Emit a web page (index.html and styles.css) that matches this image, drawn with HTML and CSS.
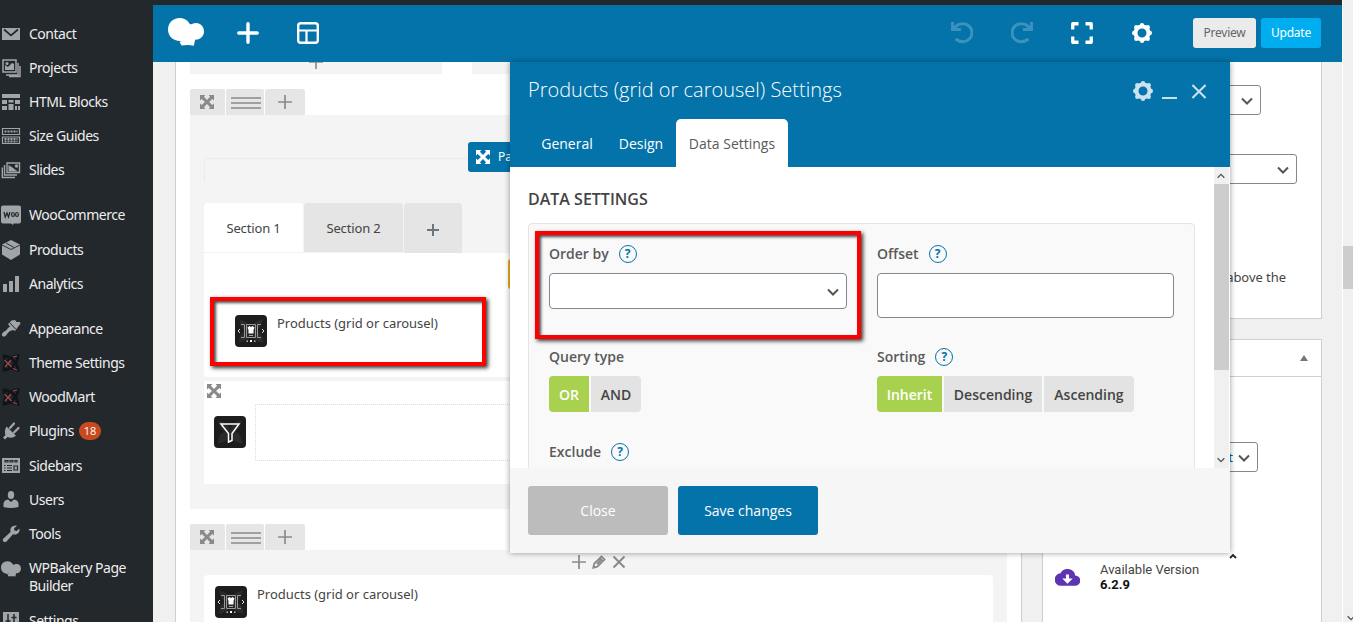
FILE: index.html
```html
<!DOCTYPE html>
<html lang="en">
<head>
<meta charset="utf-8">
<title>Page Builder</title>
<link rel="stylesheet" href="styles.css">
</head>
<body>
<svg class="defs" width="0" height="0" aria-hidden="true">
  <symbol id="expand" viewBox="0 0 14 14"><path fill="currentColor" d="M0 0h5.400L3.900 1.700 7 4.900l3.100-3.200L8.600 0H14v5.400l-1.700-1.500L9.100 7l3.200 3.100L14 8.600V14H8.600l1.500-1.700L7 9.100l-3.100 3.200L5.400 14H0V8.600l1.700 1.500L4.900 7 1.700 3.900 0 5.400z"/></symbol>
  <symbol id="plus" viewBox="0 0 14 14"><path stroke="currentColor" stroke-width="1.700" d="M7 0v14M0 7h14"/></symbol>
  <symbol id="gear" viewBox="0 0 20 20"><circle cx="10" cy="10" r="6.500" fill="none" stroke="currentColor" stroke-width="4"/><g fill="currentColor"><circle cx="10" cy="2.200" r="2.200"/><circle cx="10" cy="17.800" r="2.200"/><circle cx="2.200" cy="10" r="2.200"/><circle cx="17.800" cy="10" r="2.200"/><circle cx="4.300" cy="4.300" r="2.200"/><circle cx="15.700" cy="4.300" r="2.200"/><circle cx="4.300" cy="15.700" r="2.200"/><circle cx="15.700" cy="15.700" r="2.200"/></g></symbol>
  <symbol id="chef" viewBox="0 0 36 28"><path fill="currentColor" d="M11.500 0C16.500 0 20 2.500 21.500 5.700 23 6.700 24 6.500 25 5.600 31 3.500 36 7.500 36 13.500c0 4.800-4 8.500-8.800 8.100l-1.400 6.100c-4-1.100-8-.9-12.300-.3l-2-3.700 3.200-1C6 24 0 19 0 11.500 0 5 5 0 11.500 0z"/></symbol>
  <symbol id="chevron" viewBox="0 0 12 8"><path fill="none" stroke="#555" stroke-width="2" d="m1 1.500 5 5 5-5"/></symbol>
  <symbol id="wood" viewBox="0 0 18 18"><g fill="none" stroke="#10151b" stroke-width="2.800"><path d="M2 2c6 0 14 7 14 14-7 0-14-7-14-14z"/><path d="M16 2C16 8 9 16 2 16c0-7 7-14 14-14z"/></g><path fill="none" stroke="#a24a48" stroke-width="1.300" d="m2.500 6 7 7M3 13l6-7M11 3.200l4-1.200M11 14.500l4 1.500"/></symbol>
  <symbol id="carousel" viewBox="0 0 32 32"><rect width="32" height="32" rx="4" fill="#1d1d1d"/><path fill="#2b2b2b" d="M4 4q12 3 12 12Q16 7 28 4q-3 12-8 12 8 0 8 12-12-3-12-12 0 9-12 12 0-12 8-12Q6 16 4 4z"/><path fill="none" stroke="#999" d="M6 9.500h3.500v13H6M26 9.500h-3.500v13H26M11.500 9.500h9v13h-9z"/><path fill="#fff" d="m12.500 12.500 2-1.500 1.500 1 1.500-1 2 1.500-1 2.500v3.500h-5V15z"/><path stroke="#aaa" d="M14 20.500h4"/><path fill="none" stroke="#ddd" d="m5 14-2 2 2 2M27 14l2 2-2 2"/><path fill="#bbb" d="M11.500 25.500H13V27h-1.500zM19 25.500h1.500V27H19z"/><path fill="#fff" d="M15 25h2v2h-2z"/></symbol>
</svg>

<div class="window">
<div class="app">
  <aside class="sidebar">
    <div class="item"><svg viewBox="0 0 20 20"><path d="M1 4h18v12H1z"/><path fill="none" stroke="#23282d" stroke-width="1.700" d="m3 5.500 7 6 7-6"/></svg><span>Contact</span></div>
    <div class="item"><svg viewBox="0 0 20 20"><path fill="none" stroke="#a0a5aa" stroke-width="1.500" d="M2 2h13v12H2zM17 5v12H5M19 8v10.500H8"/><path d="M4 12V7l3 2 4-4 2 1v6z"/><circle cx="6" cy="5.500" r="1.500"/></svg><span>Projects</span></div>
    <div class="item"><svg viewBox="0 0 20 20"><path d="M1 2h18v4H1zM1 8h5v4H1zM7.500 8h5v2.500h-5zM14 8h5v4h-5zM1 14h5v4H1zM7.500 12h5v6h-5zM14 14h2v4h-2zM17 14h2v4h-2z"/></svg><span>HTML Blocks</span></div>
    <div class="item"><svg viewBox="0 0 20 20"><g fill="none" stroke="#a0a5aa" stroke-width="1.200"><path d="M1.500 2.500h17v6h-17zM1.500 11h17v6.500h-17z"/><path stroke-width="1.800" stroke-dasharray="2 1" d="M3.500 5.500h13M3.500 13h13M3.500 15.500h13"/></g></svg><span>Size Guides</span></div>
    <div class="item"><svg viewBox="0 0 20 20"><path fill="none" stroke="#a0a5aa" stroke-width="1.400" d="M6 3h12.500v9.500H6zM3.500 5v10H16M1.300 7.500v10H14"/><path d="m7.500 5 4 2.500 2.500 2 3 2H7.500z"/><circle cx="15.500" cy="6" r="1.700"/></svg><span>Slides</span></div>
    <div class="sep"></div>
    <div class="item"><svg viewBox="0 0 20 20"><path d="M2 .5h16q2 0 2 2v14q0 2-2 2h-5.500L12 20l-2-1.500H2q-2 0-2-2v-14q0-2 2-2z"/><path fill="none" stroke="#23282d" stroke-width="1.300" d="m3 7 1.200 5L6 8l1.500 4L9 7"/><ellipse cx="12" cy="9.500" rx="1.400" ry="2" fill="none" stroke="#23282d" stroke-width="1.200"/><ellipse cx="16" cy="9.500" rx="1.400" ry="2" fill="none" stroke="#23282d" stroke-width="1.200"/></svg><span>WooCommerce</span></div>
    <div class="item"><svg viewBox="0 0 20 20"><path d="m10 0 9 4.500v10L10 20l-9-5.500v-10z"/><path fill="none" stroke="#23282d" stroke-width=".9" d="m1 5 9 4.500L19 5M5 3l8 4.500"/></svg><span>Products</span></div>
    <div class="item"><svg viewBox="0 0 20 20"><path d="M2 10h4v8H2zM8 7h4v11H8zM14 2h4v16h-4z"/></svg><span>Analytics</span></div>
    <div class="sep"></div>
    <div class="item"><svg viewBox="0 0 20 20"><path d="m7 5 3.500-3.500L14 1l1.500 2H19l.5 1.500L14 12l-2-1-3 1q-2 1-4 4.500-2 2-3.500.500T2 13.500q4-2 5-4.500l2-1.500z"/><path stroke="#23282d" d="m8.500 3.500 6.500 7"/></svg><span>Appearance</span></div>
    <div class="item"><svg viewBox="0 0 20 20"><use href="#wood" x="1" y="1" width="18" height="18"/></svg><span>Theme Settings</span></div>
    <div class="item"><svg viewBox="0 0 20 20"><use href="#wood" x="1" y="1" width="18" height="18"/></svg><span>WoodMart</span></div>
    <div class="item"><svg viewBox="0 0 20 20"><path d="m5.500 5.500 9.500 9.200q-4 3.300-8.500 1.300L4 18.500l-2-2L4.500 14Q3 10 5.500 5.500z"/><path stroke="#a0a5aa" stroke-width="2.300" stroke-linecap="round" d="m9 7 4-4.500M13 11.500 17.500 7"/></svg><span>Plugins</span><b class="count">18</b></div>
    <div class="item"><svg viewBox="0 0 20 20"><path d="M1 2h18v15H1z"/><path fill="none" stroke="#23282d" stroke-width="1.200" d="M4 4.500h3V6H4zM9 4.500h3V6H9zM14 4.500h2V6h-2zM3 9.500h1.500M6 9.500h5M3 12h1.500M6 12h5M3 14.500h1.500M6 14.500h5M13 10h3.500v4H13z"/></svg><span>Sidebars</span></div>
    <div class="item"><svg viewBox="0 0 20 20"><ellipse cx="10" cy="5" rx="3.200" ry="4"/><path d="M2.500 17v-3.500Q3 10 7 9.500l3 2.500 3-2.500q4 .5 4.500 4V17q-7.500 2-15 0z"/></svg><span>Users</span></div>
    <div class="item"><svg viewBox="0 0 20 20"><path d="M16 1.500 13 4.500l.5 2 2 .5 3-2.500q.5 4-2.500 5.500-2 1-4 .3L5.500 17.500Q3 19 2 17t1-3l6.500-6Q8.500 5 10.500 3T16 1.500z"/></svg><span>Tools</span></div>
    <div class="item two"><svg viewBox="0 0 20 20"><use href="#chef" y="2" width="20" height="16" color="#a0a5aa"/></svg><span>WPBakery Page<br>Builder</span></div>
    <div class="item"><svg viewBox="0 0 20 20"><path d="M2 1h16v17H2z"/><path stroke="#23282d" stroke-width="1.500" d="M7 3v12M4.500 10h5M13 3v12M10.500 6.500h5"/></svg><span>Settings</span></div>
  </aside>

  <main class="main">
    <header class="navbar">
      <svg class="logo" viewBox="0 0 36 28"><use href="#chef"/></svg>
      <svg class="nav-plus" viewBox="0 0 22 22"><path stroke="#fff" stroke-width="3.400" stroke-linecap="round" d="M11 1.800v18.400M1.800 11h18.400"/></svg>
      <svg class="nav-layout" viewBox="0 0 22 22"><rect x="1.200" y="1.200" width="19.600" height="19.600" rx="2.500" fill="none" stroke="#fff" stroke-width="2.400"/><path stroke="#fff" stroke-width="2.200" d="M1 8.500h20M9.500 9v12"/></svg>
      <span class="grow"></span>
      <svg class="nav-ico faded" viewBox="0 0 22 22"><path fill="none" stroke="#fff" stroke-width="3" d="M1.500 0v7.500H10M2 7.500Q6 1.500 12 1.700a9 9 0 0 1 0 18q-4 0-7.500-2.700"/></svg>
      <svg class="nav-ico faded redo" viewBox="0 0 22 22"><path fill="none" stroke="#fff" stroke-width="3" d="M1.500 0v7.500H10M2 7.500Q6 1.500 12 1.700a9 9 0 0 1 0 18q-4 0-7.500-2.700"/></svg>
      <svg class="nav-ico" viewBox="0 0 22 22"><path fill="none" stroke="#fff" stroke-width="3.300" stroke-linejoin="round" d="M1.750 7.500V1.750H7.500M14.500 1.750h5.750V7.500M20.250 14.500v5.750H14.500M7.500 20.250H1.750V14.500"/></svg>
      <svg class="nav-gear" viewBox="0 0 20 20"><use href="#gear"/></svg>
      <button class="nav-btn preview">Preview</button>
      <button class="nav-btn update">Update</button>
    </header>

    <div class="content">
      <section class="editor">
        <div class="prev-row"><div class="prev-a"><svg viewBox="0 0 14 14"><use href="#plus"/></svg></div><div class="prev-b"></div></div>
        <div class="controls first"><i class="c1"><svg viewBox="0 0 14 14"><use href="#expand"/></svg></i><i class="c2"><s></s><s></s><s></s></i><i class="c3"><svg viewBox="0 0 14 14"><use href="#plus"/></svg></i></div>
        <div class="row-block">
          <div class="tour-control"><div class="page-btn"><svg viewBox="0 0 14 14"><use href="#expand"/></svg><span>Pa</span></div></div>
          <div class="dotted-head"></div>
          <div class="sections">
            <div class="section active">Section 1</div><div class="section">Section 2</div><div class="section add"><svg viewBox="0 0 14 14"><path stroke="#6c757d" stroke-width="2.300" d="M7 0v14M0 7h14"/></svg></div>
          </div>
          <div class="pane">
            <div class="element"><svg viewBox="0 0 32 32"><use href="#carousel"/></svg><span>Products (grid or carousel)</span></div>
            <div class="orange"></div>
            <div class="mark mark-a"></div>
          </div>
          <div class="filter-block">
            <svg class="grab" viewBox="0 0 14 14"><use href="#expand"/></svg>
            <div class="filter-row">
              <svg class="filter" viewBox="0 0 32 32"><rect width="32" height="32" rx="4" fill="#1d1d1d"/><path fill="#2b2b2b" d="M4 4q12 3 12 12Q16 7 28 4q-3 12-8 12 8 0 8 12-12-3-12-12 0 9-12 12 0-12 8-12Q6 16 4 4z"/><path fill="none" stroke="#fff" stroke-width="1.500" d="M7 8h18l-7 9.500v7L14.500 26v-8.500z"/></svg>
              <div class="dropzone"></div>
            </div>
          </div>
        </div>
        <div class="controls second"><i class="c1"><svg viewBox="0 0 14 14"><use href="#expand"/></svg></i><i class="c2"><s></s><s></s><s></s></i><i class="c3"><svg viewBox="0 0 14 14"><use href="#plus"/></svg></i></div>
        <div class="row-block last">
          <div class="tools">
            <svg viewBox="0 0 14 14"><use href="#plus"/></svg>
            <svg viewBox="0 0 14 14"><path fill="none" stroke="currentColor" stroke-width="1.800" d="m1.300 12.700 1-4.200 7.200-7 3 3-7.200 7.200zM8 3.500l2.500 2.500M9 5 5 9"/></svg>
            <svg viewBox="0 0 14 14"><path stroke="currentColor" stroke-width="2" d="m1.500 1.500 11 11M12.500 1.500l-11 11"/></svg>
          </div>
          <div class="last-pane"><div class="element"><svg viewBox="0 0 32 32"><use href="#carousel"/></svg><span>Products (grid or carousel)</span></div></div>
        </div>
      </section>

      <section class="meta">
        <div class="postbox box-a">
          <div class="select sel-a"><svg viewBox="0 0 12 8"><use href="#chevron"/></svg></div>
          <div class="select sel-b"><svg viewBox="0 0 12 8"><use href="#chevron"/></svg></div>
          <p class="hint">above the</p>
        </div>
        <div class="postbox box-b">
          <div class="box-head"><span class="tri"></span></div>
          <div class="select sel-c"><span>t</span><svg viewBox="0 0 12 8"><use href="#chevron"/></svg></div>
          <div class="caret-row"><svg viewBox="0 0 8 6"><path fill="none" stroke="#222" stroke-width="1.800" d="m1 5 3-3 3 3"/></svg></div>
          <div class="version">
            <svg viewBox="0 0 24 16"><path fill="#5e35b1" d="M19.400 6A7.500 7.500 0 0 0 5.300 4 6 6 0 0 0 6 16h13a5 5 0 0 0 .4-10z"/><path fill="#fff" d="M10.500 5h3v4H17l-5 5-5-5h3.500z"/></svg>
            <div><div>Available Version</div><b>6.2.9</b></div>
          </div>
        </div>
      </section>
    </div>
  </main>
</div>
<div class="page-scroll"><div class="page-thumb"></div><svg viewBox="0 0 12 8"><use href="#chevron"/></svg></div>
</div>

<div class="modal">
  <header class="modal-head">
    <div class="title-row"><h2>Products (grid or carousel) Settings</h2>
      <svg class="m-gear" viewBox="0 0 20 20"><use href="#gear"/></svg>
      <span class="m-min"></span>
      <svg class="m-close" viewBox="0 0 16 16"><path stroke="currentColor" stroke-width="2.200" d="m1 1 14 14M15 1 1 15"/></svg>
    </div>
    <nav class="tabs"><span class="t1">General</span><span class="t2">Design</span><span class="t3">Data Settings</span></nav>
  </header>
  <div class="modal-body">
    <div class="scroll-content">
      <h3>DATA SETTINGS</h3>
      <div class="fields">
        <div class="field"><label>Order by<em>?</em></label><div class="input order"><svg viewBox="0 0 12 8"><use href="#chevron"/></svg></div></div>
        <div class="field"><label>Offset<em>?</em></label><div class="input offset"></div></div>
        <div class="field"><label>Query type</label><div class="group"><span class="on w-or">OR</span><span class="w-and">AND</span></div></div>
        <div class="field"><label>Sorting<em>?</em></label><div class="group"><span class="on w-inh">Inherit</span><span class="w-desc">Descending</span><span class="w-asc">Ascending</span></div></div>
        <div class="field"><label>Exclude<em>?</em></label></div>
      </div>
    </div>
    <div class="m-scroll"><svg class="up" viewBox="0 0 12 8"><use href="#chevron"/></svg><div class="m-thumb"></div><svg viewBox="0 0 12 8"><use href="#chevron"/></svg></div>
  </div>
  <footer class="modal-foot"><button class="close">Close</button><button class="save">Save changes</button></footer>
  <div class="mark mark-b"></div>
</div>
</body>
</html>
```
FILE: styles.css
```css
* { box-sizing: border-box; }
body { margin: 0; width: 1353px; height: 622px; overflow: hidden; position: relative; background: #f0f0f0; font: 13px/18px "Noto Sans", "Open Sans", sans-serif; color: #444; }
h2, h3, p { margin: 0; }
svg { display: block; flex: none; }
i, em, s { font-style: normal; text-decoration: none; }
button { border: 0; padding: 0; font: inherit; border-radius: 3px; color: #fff; }
.defs { position: absolute; }
.window { display: flex; height: 622px; }
.app { display: flex; width: 1342px; height: 622px; background: #23282d; overflow: hidden; }

.sidebar { width: 153px; flex: none; padding-top: 16.500px; color: #eee; font-size: 14px; font-family: "Noto Sans", sans-serif; letter-spacing: -.48px; }
.item { height: 34.200px; display: flex; align-items: center; white-space: nowrap; }
.item svg { width: 20px; height: 20px; margin: 0 8px 0 1px; fill: #a0a5aa; }
.sep { height: 10.900px; }
.two { height: 52.400px; align-items: flex-start; padding-top: 8px; }
.count { margin-left: 5px; width: 22px; height: 18px; border-radius: 9px; background: #ca4a1f; color: #fff; font: 11px/18px "Open Sans", sans-serif; text-align: center; letter-spacing: 0; }

.main { flex: 1; margin-top: 5px; background: #f0f0f0; min-width: 0; }
.navbar { height: 57px; background: #0473aa; display: flex; align-items: center; padding: 0 21px 1px 15px; color: #fff; }
.logo { width: 36px; height: 28px; margin-top: -2px; }
.nav-plus { width: 22px; height: 22px; margin-left: 33px; }
.nav-layout { width: 22px; height: 22px; margin-left: 38px; }
.grow { flex: 1; }
.nav-ico { width: 22px; height: 22px; margin-right: 38px; }
.faded { opacity: .22; }
.redo { transform: scaleX(-1); }
.nav-gear { width: 20px; height: 20px; margin: 0 41px 0 1px; }
.nav-btn { height: 30px; font-size: 12px; font-family: "Noto Sans", sans-serif; letter-spacing: -.25px; }
.preview { width: 63px; background: #ebebeb; color: #666; margin-right: 5px; }
.update { width: 60px; background: #00aef0; }

.content { display: flex; height: 560px; padding-left: 22px; gap: 20px; }
.editor { width: 847px; background: #fff; border: solid #ccd0d4; border-width: 0 1px; padding: 0 14px; flex: none; }
.prev-row { display: flex; gap: 30px; height: 12px; overflow: hidden; }
.prev-a { width: 252px; background: #f4f4f4; color: #8a8a8a; }
.prev-a svg { width: 14px; height: 14px; margin: -7px auto 0; }
.prev-b { flex: 1; background: #f4f4f4; }
.controls { display: flex; gap: 1px; height: 26px; margin-top: 15px; color: #8a8a8a; }
.controls i { background: #e6e6e6; border-radius: 2px 2px 0 0; display: flex; align-items: center; justify-content: center; }
.controls svg, .tools svg { width: 14px; height: 14px; }
.controls .c1 { width: 35px; padding-right: 1px; }
.controls .c2 { width: 38px; flex-direction: column; gap: 3px; padding: 1px 0 0 2px; }
.controls .c3 { width: 40px; }
.c2 s { width: 30px; height: 2px; background: #a0a0a0; }
.row-block { height: 394px; background: #f4f4f4; padding: 27px 0 0 14px; overflow: hidden; }
.tour-control { height: 16px; padding-left: 264px; }
.page-btn { position: relative; z-index: 1; width: 180px; height: 30px; border-radius: 3px; background: #0473aa; color: #fff; display: flex; align-items: center; gap: 8px; padding-left: 8px; font-size: 12px; }
.page-btn svg { width: 14px; height: 14px; }
.dotted-head { height: 23px; border: dotted #e2e2e2; border-width: 1px 0 0 1px; }
.sections { display: flex; gap: 1px; height: 49px; margin-top: 22px; }
.section { width: 99px; background: #e5e5e5; border-radius: 4px 4px 0 0; display: flex; align-items: center; justify-content: center; font-size: 13px; letter-spacing: -.15px; }
.section.active { background: #fff; }
.section.add { width: 58px; height: 50px; padding-top: 4px; }
.add svg { width: 12px; height: 12px; }
.pane { position: relative; height: 124px; margin-top: 1px; background: #fff; border-radius: 0 0 4px 4px; padding: 62px 0 0 31px; }
.element { display: flex; gap: 10px; }
.element svg { width: 32px; height: 32px; }
.element span { height: 18px; margin-top: -1px; white-space: nowrap; letter-spacing: -.02px; }
.orange { position: absolute; left: 304px; top: 6px; width: 100px; height: 30px; border-radius: 3px; background: #f0ad1e; }
.mark { position: absolute; border: 4px solid #f00; box-shadow: 2px 2px 4px rgba(0,0,0,.8), inset 2px 2px 3px rgba(0,0,0,.7); pointer-events: none; }
.mark-a { left: 6px; top: 44px; width: 276px; height: 69px; }
.filter-block { height: 103px; margin-top: 4px; background: #fff; padding: 3px; color: #8a8a8a; }
.grab { width: 14px; height: 14px; }
.filter-row { display: flex; margin-top: 6px; padding-left: 7px; }
.filter { width: 32px; height: 32px; margin: 12px 9px 0 0; }
.dropzone { flex: 1; height: 57px; border: 1px dotted #dcdcdc; }
.row-block.last { height: 72px; padding: 5px 14px 0; }
.tools { height: 20px; display: flex; gap: 6px; justify-content: center; color: #8a8a8a; }
.last-pane { background: #fff; height: 47px; padding: 11px; border-radius: 4px 4px 0 0; }

.meta { width: 280px; }
.postbox { background: #fff; border: 1px solid #ccd0d4; }
.box-a { height: 257px; border-top: 0; padding-top: 23px; }
.box-b { height: 300px; margin-top: 20px; }
.box-head { height: 37px; border-bottom: 1px solid #ccd0d4; display: flex; align-items: center; justify-content: flex-end; padding-right: 13px; }
.tri { border: 4px solid transparent; border-top: 0; border-bottom: 6px solid #72777c; }
.select { height: 30px; border: 1px solid #7e8993; border-radius: 3px; display: flex; align-items: center; justify-content: flex-end; padding-right: 7px; color: #016087; }
.select svg { width: 12px; height: 8px; margin-top: 2px; }
.sel-a { width: 206px; margin-left: 12px; }
.sel-b { width: 242px; margin: 39px 0 0 12px; }
.hint { text-align: right; padding-right: 35px; margin-top: 84px; letter-spacing: -.05px; }
.sel-c { width: 203px; margin: 65px 0 0 12px; gap: 5px; }
.caret-row { height: 88px; padding: 81px 0 0 186px; }
.caret-row svg { width: 8px; height: 6px; }
.version { display: flex; gap: 20px; padding: 2px 0 0 12px; font: 13px/15px Roboto, sans-serif; }
.version svg { width: 25px; height: 17px; margin-top: 7px; }
.version b { color: #111; font-weight: 700; }

.page-scroll { width: 11px; border-left: 1px solid #fff; background: #f0f0f0; padding-top: 246px; }
.page-thumb { height: 43px; background: #cdcdcd; }
.page-scroll svg { width: 8px; height: 6px; margin: 326px 0 0 4px; }

.modal { position: absolute; z-index: 5; left: 510px; top: 62px; width: 720px; height: 491px; background: #fff; box-shadow: 0 0 6px rgba(0,0,0,.4); font-family: "Open Sans", sans-serif; }
.modal-head { height: 105px; background: #0473aa; color: #fff; padding: 0 23px 0 18px; }
.title-row { height: 57px; display: flex; align-items: center; color: #cbe2ee; }
.title-row h2 { flex: 1; font-size: 20px; font-weight: 300; color: #fff; line-height: 28px; margin-top: -1px; letter-spacing: 0; }
.m-gear { width: 20px; height: 20px; margin: 1px 9px 0 0; }
.m-min { width: 15px; height: 2px; background: #cbe2ee; margin: 14px 14px 0 0; }
.m-close { width: 16px; height: 15px; margin-top: 1px; }
.tabs { display: flex; height: 48px; font-size: 14px; line-height: 50px; }
.tabs span { text-align: center; }
.t1 { width: 78px; }
.t2 { width: 70px; }
.t3 { width: 112px; background: #fff; border-radius: 5px 5px 0 0; color: #5a5a5a; }
.modal-body { height: 301px; display: flex; overflow: hidden; }
.scroll-content { width: 704px; padding: 20px 19px 0 18px; }
.scroll-content h3 { font-size: 16px; line-height: 24px; font-weight: 600; color: #444; }
.fields { margin-top: 12px; height: 300px; border: 1px solid #e5e5e5; border-radius: 4px; background: #f9f9f9; padding: 18px 20px; display: grid; grid-template-columns: 298px 297px; column-gap: 30px; grid-template-rows: 103px 95px 40px; }
label { display: flex; align-items: center; height: 24px; gap: 10px; font-size: 14px; font-weight: 600; color: #5a5a5a; }
label em { width: 18px; height: 18px; border: 1px solid #0473aa; border-radius: 9px; color: #0473aa; text-align: center; font: 700 12px/16px "Open Sans", sans-serif; }
.input { margin-top: 7px; background: #fff; border: 1px solid #7e8993; border-radius: 4px; }
.order { height: 36px; display: flex; align-items: center; justify-content: flex-end; padding: 2px 7px 0 0; }
.order svg { width: 12px; height: 8px; }
.offset { height: 45px; }
.group { display: flex; gap: 2px; margin-top: 7px; height: 36px; font-size: 14px; line-height: 37px; font-weight: 600; }
.group span { background: #e3e3e3; text-align: center; }
.group .on { background: #a9d150; color: #fff; border-radius: 4px 0 0 4px; }
.group span:last-child { border-radius: 0 4px 4px 0; }
.w-or { width: 40px; } .w-and { width: 50px; } .w-inh { width: 65px; } .w-desc { width: 98px; } .w-asc { width: 90px; }
.m-scroll { width: 15px; background: #f0f0f0; }
.m-scroll svg { width: 8px; height: 6px; margin-left: 3px; }
.m-scroll .up { transform: scaleY(-1); margin: 6px 0 5px 3px; }
.m-thumb { height: 186px; margin-bottom: 87px; background: #cdcdcd; }
.modal-foot { height: 85px; background: #f6f6f6; padding: 18px; display: flex; gap: 10px; }
.modal-foot button { width: 140px; height: 49px; font-size: 14px; }
.close { background: #bcbcbc; }
.save { background: #0473aa; }
.mark-b { left: 25px; top: 169px; width: 326px; height: 108px; }
```
